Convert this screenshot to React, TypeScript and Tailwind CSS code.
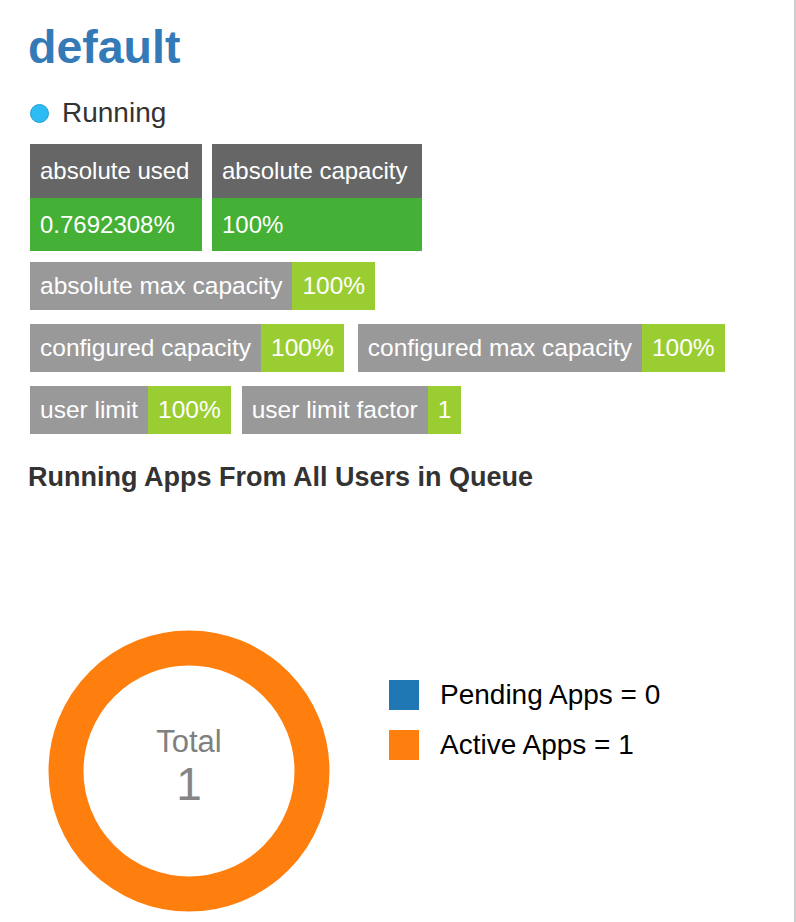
import React from "react";

type Metric = { label: string; value: string };

const rows: { gap: string; items: Metric[] }[] = [
  { gap: "gap-[11px]", items: [{ label: "absolute max capacity", value: "100%" }] },
  {
    gap: "gap-[14px]",
    items: [
      { label: "configured capacity", value: "100%" },
      { label: "configured max capacity", value: "100%" },
    ],
  },
  {
    gap: "gap-[11px]",
    items: [
      { label: "user limit", value: "100%" },
      { label: "user limit factor", value: "1" },
    ],
  },
];

function StackedStat({ label, value, width }: Metric & { width: string }) {
  return (
    <div className={`flex flex-col whitespace-nowrap ${width}`}>
      <div className="flex h-[54px] items-center bg-[#666666] px-[10px] text-white">{label}</div>
      <div className="flex h-[53px] items-center bg-[#44b035] px-[10px] text-white">{value}</div>
    </div>
  );
}

function InlineStat({ label, value }: Metric) {
  return (
    <div className="flex h-[48px] whitespace-nowrap text-white">
      <div className="flex items-center bg-[#999999] px-[10px]">{label}</div>
      <div className="flex items-center bg-[#9acd32] px-[10px]">{value}</div>
    </div>
  );
}

function Donut() {
  return (
    <svg width="282" height="282" viewBox="0 0 282 282">
      <circle cx="141" cy="141" r="123" fill="none" stroke="#ff7f0e" strokeWidth="35" />
      <text
        x="141"
        y="122"
        textAnchor="middle"
        fill="#808080"
        fontSize="31"
        fontFamily="'Liberation Sans', Arial, sans-serif"
      >
        Total
      </text>
      <text
        x="141"
        y="170"
        textAnchor="middle"
        fill="#858585"
        fontSize="46"
        fontFamily="'Liberation Sans', Arial, sans-serif"
      >
        1
      </text>
    </svg>
  );
}

export default function App() {
  return (
    <div className="min-h-[922px] w-[796px] border-r-2 border-[#cccccc] bg-white pl-[30px] pt-[24px] font-['Liberation_Sans',Arial,sans-serif]">
      <h1 className="ml-[-2px] h-[46px] text-[46.5px] font-bold leading-[46px] text-[#337ab7]">
        default
      </h1>

      <div className="mt-[29px] flex h-[28px] items-center">
        <span className="h-[19px] w-[19px] rounded-full border border-[#1e9fd8] bg-[#2abcf2]" />
        <span className="ml-[13px] text-[28px] leading-[28px] text-[#333333]">Running</span>
      </div>

      <div className="mt-[17px] flex gap-[10px] text-[24px]">
        <StackedStat label="absolute used" value="0.7692308%" width="w-[172px]" />
        <StackedStat label="absolute capacity" value="100%" width="w-[210px]" />
      </div>

      <div className="mt-[11px] flex flex-col gap-[14px] text-[24.5px]">
        {rows.map((row, i) => (
          <div key={i} className={`flex ${row.gap}`}>
            {row.items.map((m) => (
              <InlineStat key={m.label} {...m} />
            ))}
          </div>
        ))}
      </div>

      <h3 className="ml-[-2px] mt-[28px] text-[27px] font-bold leading-[30px] text-[#333333]">
        Running Apps From All Users in Queue
      </h3>

      <div className="mt-[138px] flex items-start">
        <div className="ml-[18px]">
          <Donut />
        </div>
        <div className="ml-[59px] mt-[50px] flex flex-col gap-[20px] text-[28px] text-black">
          <div className="flex h-[30px] items-center">
            <span className="h-[30px] w-[30px] bg-[#1f77b4]" />
            <span className="ml-[21px] leading-[30px]">Pending Apps = 0</span>
          </div>
          <div className="flex h-[30px] items-center">
            <span className="h-[30px] w-[30px] bg-[#ff7f0e]" />
            <span className="ml-[21px] leading-[30px]">Active Apps = 1</span>
          </div>
        </div>
      </div>
    </div>
  );
}
